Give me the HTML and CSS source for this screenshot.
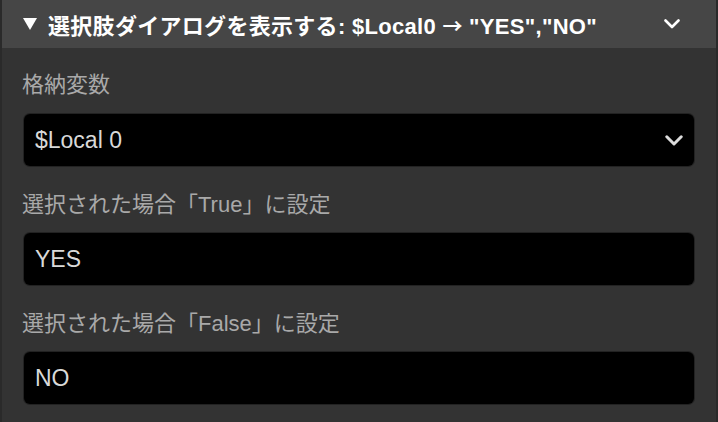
FILE: index.html
```html
<!DOCTYPE html>
<html lang="ja">
<head>
<meta charset="utf-8">
<link rel="stylesheet" href="styles.css">
</head>
<body>
<div class="panel">
  <div class="header">
    <span class="tri"></span>
    <span class="title">選択肢ダイアログを表示する: $Local0 <span class="arrow">→</span> "YES","NO"</span>
    <svg class="hchev" width="16" height="10" viewBox="0 0 16 10"><path d="M1.5 1.5 L8 8 L14.5 1.5" fill="none" stroke="#fff" stroke-width="2.6" stroke-linecap="round" stroke-linejoin="round"/></svg>
  </div>
  <div class="body">
    <div class="label first">格納変数</div>
    <div class="box select">
      <span class="val">$Local 0</span>
      <svg class="schev" width="18" height="11" viewBox="0 0 18 11"><path d="M1.8 1.8 L9 9 L16.2 1.8" fill="none" stroke="#dcdcdc" stroke-width="3" stroke-linecap="round" stroke-linejoin="round"/></svg>
    </div>
    <div class="label">選択された場合「True」に設定</div>
    <div class="box"><span class="val">YES</span></div>
    <div class="label">選択された場合「False」に設定</div>
    <div class="box"><span class="val">NO</span></div>
  </div>
</div>
</body>
</html>
```
FILE: styles.css
```css
html, body {
  margin: 0;
  padding: 0;
  background: #333333;
}
body {
  width: 718px;
  height: 422px;
  overflow: hidden;
  font-family: "Liberation Sans", "Noto Sans CJK JP", sans-serif;
}
.panel {
  height: 422px;
  border-left: 2px solid #2a2a2a;
  border-right: 2px solid #2a2a2a;
  background: #333333;
  box-sizing: border-box;
}
.header {
  height: 48px;
  background: #464646;
  display: flex;
  align-items: center;
  padding-left: 21px;
  padding-right: 36px;
  box-sizing: border-box;
}
.tri {
  width: 0;
  height: 0;
  border-left: 7px solid transparent;
  border-right: 7px solid transparent;
  border-top: 12px solid #ffffff;
  margin-right: 11px;
}
.title {
  color: #ffffff;
  font-weight: bold;
  font-size: 22px;
  letter-spacing: 0.3px;
  flex: 1;
  white-space: nowrap;
}
.arrow {
  font-family: "Noto Sans CJK JP", sans-serif;
  font-size: 20px;
}
.hchev {
  display: block;
}
.body {
  padding: 0 22px 0 20px;
}
.label {
  color: #a9a9a9;
  font-size: 22px;
  line-height: 30px;
  margin-top: 24px;
  margin-bottom: 13px;
}
.label.first {
  margin-top: 22px;
  margin-bottom: 14px;
}
.box {
  margin-left: 2px;
  height: 52px;
  background: #000000;
  border-radius: 6px;
  display: flex;
  align-items: center;
  padding: 0 11px;
  box-sizing: border-box;
  box-shadow: 0 0 0 1px #222;
}
.val {
  color: #d9d9d9;
  font-size: 23px;
  flex: 1;
}
.schev {
  display: block;
}
```
